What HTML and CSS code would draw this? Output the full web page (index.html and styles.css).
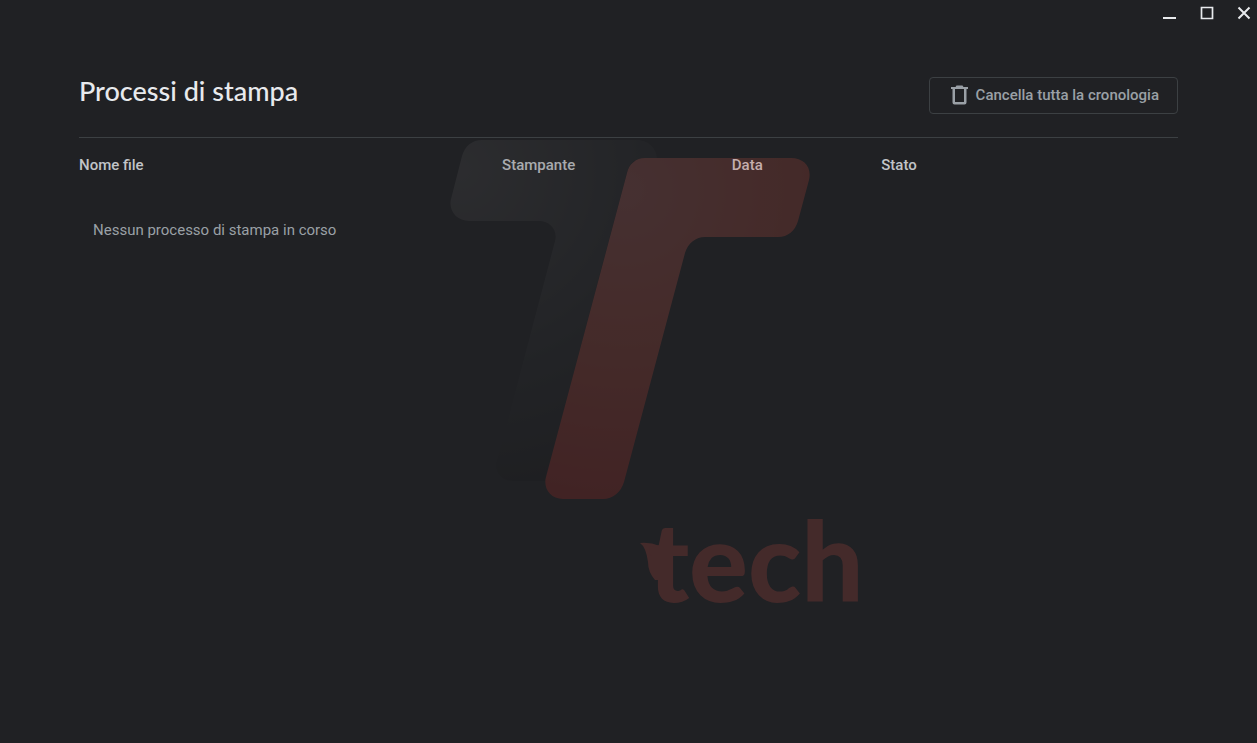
FILE: index.html
```
<!DOCTYPE html>
<html lang="it">
<head>
  <meta charset="UTF-8" />
  <meta name="viewport" content="width=device-width, initial-scale=1.0"/>
  <title>Processi di stampa</title>
  <link rel="stylesheet" href="styles.css">
</head>
<body>
  <div class="window-bar">
    <button type="button" aria-label="Riduci a icona">
      <svg width="14" height="14" viewBox="0 0 14 14"><path d="M0 12h13" stroke="currentColor" stroke-width="2"/></svg>
    </button>
    <button type="button" aria-label="Ingrandisci">
      <svg width="14" height="14" viewBox="0 0 14 14"><path d="M1.500 1.500h11v11h-11z" fill="none" stroke="currentColor" stroke-width="1.700"/></svg>
    </button>
    <button type="button" aria-label="Chiudi">
      <svg width="14" height="14" viewBox="0 0 14 14"><path d="M1.500 1.500l11 11M12.500 1.500l-11 11" stroke="currentColor" stroke-width="2"/></svg>
    </button>
  </div>

  <main>
    <header>
      <h1>Processi di stampa</h1>
      <button type="button" class="clear-btn">
        <svg width="17" height="20" viewBox="0 0 17 20"><path fill="currentColor" fill-rule="evenodd" d="M0 2h4.500l1-1.500h6l1 1.500H17v2h-1.500v13.500a2 2 0 0 1-2 2h-10a2 2 0 0 1-2-2V4H0zM4 4v13h9V4z"/></svg>
        Cancella tutta la cronologia
      </button>
    </header>

    <table>
      <thead>
        <tr>
          <th class="col-name">Nome file</th>
          <th class="col-printer">Stampante</th>
          <th class="col-date">Data</th>
          <th>Stato</th>
        </tr>
      </thead>
      <tbody>
        <tr>
          <td colspan="4">Nessun processo di stampa in corso</td>
        </tr>
      </tbody>
    </table>
  </main>

  <!-- watermark -->
  <svg class="watermark" width="506" height="540" viewBox="376 130 506 540">
    <defs>
      <radialGradient id="dark" gradientUnits="userSpaceOnUse" cx="460" cy="170" r="340">
        <stop offset="0" stop-color="#5e5c5d"/>
        <stop offset="0.600" stop-color="#2d2f31"/>
        <stop offset="1" stop-color="#171718"/>
      </radialGradient>
      <radialGradient id="red" gradientUnits="userSpaceOnUse" cx="625" cy="190" r="320">
        <stop offset="0" stop-color="#dc6e68"/>
        <stop offset="0.500" stop-color="#d65240"/>
        <stop offset="1" stop-color="#c52b25"/>
      </radialGradient>
    </defs>
    <path fill="url(#dark)" d="M482 140H636C648 140 656 147 657 158H645Q631 158 627 172L545 480V481H513C502 481 494 472 497 461L555 241C558 230 550 221 539 221H469C457 221 448 211 451 199L462 156C465 146 472 140 482 140Z"/>
    <path fill="url(#red)" d="M645 158H791C804 158 812 167 809 180L798 221C795 231 788 237 778 237H705C696 237 688 243 685 253L624 482C621 492 613 499 603 499H563C550 499 543 488 546 477L627 173C629 164 636 158 645 158Z"/>
    <g fill="#d44e44">
      <path d="M640 543Q650 542 660 546V580H655Q648 572 648 562Q646 547 640 543Z"/>
      <text x="648" y="602">tech</text>
    </g>
  </svg>
</body>
</html>
```
FILE: styles.css
```
* {
  box-sizing: border-box;
}

body {
  font-family: Roboto, Arial, sans-serif;
  margin: 0;
  min-height: 100vh;
  position: relative;
  background: #202124;
  color: #9aa0a6;
  font-size: 15px;
}

.window-bar {
  display: flex;
  justify-content: flex-end;
  height: 26px;
}

.window-bar button {
  display: flex;
  align-items: center;
  justify-content: center;
  width: 37px;
  padding: 0;
  background: none;
  border: none;
  color: #e8eaed;
}

.window-bar button:last-child {
  justify-content: flex-end;
  width: 32px;
  padding-right: 6px;
}

main {
  padding: 0 79px;
}

header {
  display: flex;
  align-items: center;
  justify-content: space-between;
  height: 112px;
  padding: 28px 0 0;
  border-bottom: 1px solid #3c4043;
}

h1 {
  margin: 0 0 10px;
  font-family: Lato, sans-serif;
  font-size: 27px;
  font-weight: 500;
  line-height: 32px;
  color: #e8eaed;
}

.clear-btn {
  display: flex;
  align-items: center;
  gap: 8px;
  height: 37px;
  padding: 0 18px 2px 21px;
  background: none;
  border: 1px solid #3c4043;
  border-radius: 4px;
  font-family: inherit;
  font-size: 15px;
  font-weight: 500;
  color: #9aa0a6;
}

table {
  width: 100%;
  table-layout: fixed;
  border-collapse: collapse;
}

th {
  height: 54px;
  padding: 0;
  text-align: left;
  font-weight: 500;
  color: #c1c4c8;
}

td {
  height: 76px;
  padding: 0 14px;
}

.col-name {
  width: 38.5%;
}

.col-printer {
  width: 20.9%;
}

.col-date {
  width: 13.6%;
}

.watermark {
  position: absolute;
  top: 130px;
  left: 50%;
  transform: translateX(-50%);
  opacity: 0.2;
  pointer-events: none;
}

.watermark text {
  font-family: Lato, sans-serif;
  font-size: 110px;
  font-weight: 900;
}
```
